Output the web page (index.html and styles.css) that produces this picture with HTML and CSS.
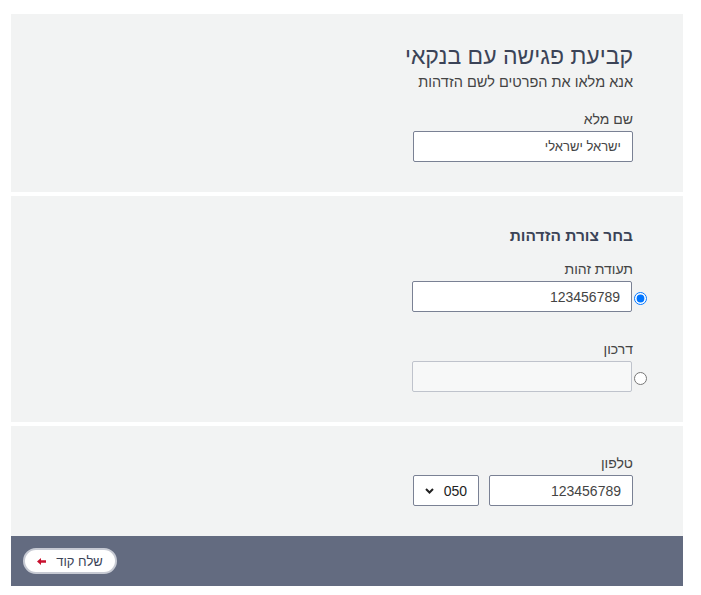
FILE: index.html
```html
<!DOCTYPE html>
<html lang="he" dir="rtl">
<head>
	<meta charset="UTF-8" />
	<title>קביעת פגישה עם בנקאי</title>
	<link rel="stylesheet" href="styles.css">
</head>
<body>
<div class="wrap">
	<div class="box">
		<h1>קביעת פגישה עם בנקאי</h1>
		<p class="sub">אנא מלאו את הפרטים לשם הזדהות</p>
		<label class="lbl" for="name">שם מלא</label>
		<input type="text" class="txt txt_he" id="name" value="ישראל ישראלי" />
	</div>
	<div class="box box2">
		<h2>בחר צורת הזדהות</h2>
		<label class="lbl" for="tz">תעודת זהות</label>
		<div class="pick">
			<input type="radio" name="idtype" checked />
			<input type="text" class="txt" id="tz" value="123456789" />
		</div>
		<label class="lbl lbl_gap" for="pass">דרכון</label>
		<div class="pick">
			<input type="radio" name="idtype" />
			<input type="text" class="txt" id="pass" disabled />
		</div>
	</div>
	<div class="box box3">
		<label class="lbl" for="phone">טלפון</label>
		<div class="phone">
			<input type="text" class="txt" id="phone" value="123456789" />
			<div class="sel">
				<select>
					<option>050</option>
					<option>052</option>
					<option>054</option>
				</select>
				<svg width="9" height="6" viewBox="0 0 9 6"><path d="M1 1l3.5 3.5L8 1" fill="none" stroke="#222" stroke-width="2"/></svg>
			</div>
		</div>
	</div>
	<div class="foot">
		<a href="#" class="btn">שלח קוד <svg class="arr" width="9" height="7" viewBox="0 0 9 7"><path d="M0 3.5L4 0v2.3h5v2.4H4V7z" fill="#c8102e"/></svg></a>
	</div>
</div>
</body>
</html>
```

FILE: styles.css
```css
body{margin:0;font-family:"Liberation Sans",Arial,sans-serif;color:#444;}
.wrap{width:672px;margin:14px 18px 0 11px;}
.box{background:#f2f3f3;padding:28px 50px 30px;margin-bottom:4px;}
.box3{margin-bottom:0;}
h1{margin:0;font-size:23px;line-height:28px;font-weight:normal;color:#3b4357;}
h2{margin:0 0 13px;font-size:15.5px;line-height:22px;font-weight:bold;color:#3b4357;}
.sub{margin:3px 0 19px;font-size:14.5px;line-height:18px;color:#444;}
.lbl{display:block;font-size:14px;line-height:18px;margin-bottom:3px;color:#444;}
.lbl_gap{margin-top:28px;}
.box2{padding-top:29px;padding-bottom:30px;}
.txt{box-sizing:border-box;width:220px;height:31px;border:1px solid #7a8194;border-radius:2px;background:#fff;padding:0 11px;font:14px "Liberation Sans",Arial,sans-serif;color:#444;}
.txt_he{font-size:13px;}
.txt:disabled{background:#f7f8f8;border-color:#bfc3cc;}
.pick{display:flex;align-items:center;margin-right:-14px;}
.pick input[type=radio]{width:13px;height:13px;margin:3px 0 0 2px;}
.phone{display:flex;}
.phone .txt{width:144px;margin-left:10px;}
.sel{position:relative;width:66px;}
.sel select{box-sizing:border-box;width:66px;height:31px;border:1px solid #7a8194;border-radius:2px;background:#fff;padding:0 11px 0 0;font:14px "Liberation Sans",Arial,sans-serif;color:#222;appearance:none;-webkit-appearance:none;}
.sel svg{position:absolute;left:12px;top:13px;pointer-events:none;}
.foot{height:50px;background:#636b80;display:flex;align-items:center;justify-content:flex-end;padding-left:12px;}
.btn{display:flex;align-items:center;justify-content:center;box-sizing:border-box;height:26px;width:94px;border:2px solid #c7cad3;border-radius:13px;background:#fff;color:#3b4357;font-size:13px;text-decoration:none;}
.arr{margin-right:10px;}
```
